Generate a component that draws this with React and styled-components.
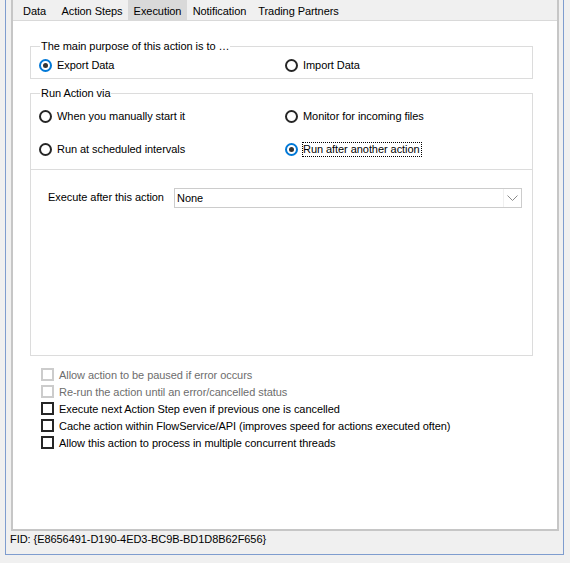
import React from 'react'
import styled, { createGlobalStyle } from 'styled-components'

const tabs = [
  { label: 'Data', width: 43 },
  { label: 'Action Steps', width: 72 },
  { label: 'Execution', width: 59, active: true },
  { label: 'Notification', width: 65 },
  { label: 'Trading Partners', width: 93 },
]

const checks = [
  { label: 'Allow action to be paused if error occurs', disabled: true },
  { label: 'Re-run the action until an error/cancelled status', disabled: true },
  { label: 'Execute next Action Step even if previous one is cancelled' },
  { label: 'Cache action within FlowService/API (improves speed for actions executed often)' },
  { label: 'Allow this action to process in multiple concurrent threads' },
]

function Radio({ checked, focused, children }) {
  return (
    <RadioLabel>
      <RadioCircle $checked={checked} />
      <RadioText $focused={focused}>{children}</RadioText>
    </RadioLabel>
  )
}

function App() {
  return (
    <>
      <GlobalStyle />
      <Frame>
        <TabControl>
          <TabStrip>
            {tabs.map((t) => (
              <Tab key={t.label} $width={t.width} $active={t.active}>
                {t.label}
              </Tab>
            ))}
          </TabStrip>

          <Panel>
            <Group>
              <Legend>The main purpose of this action is to …</Legend>
              <Options $top={6} $bottom={6}>
                <Radio checked>Export Data</Radio>
                <Radio>Import Data</Radio>
              </Options>
            </Group>

            <Group $gap={8}>
              <Legend>Run Action via</Legend>
              <Options $top={10} $bottom={13}>
                <Radio>When you manually start it</Radio>
                <Radio>Monitor for incoming files</Radio>
                <Radio>Run at scheduled intervals</Radio>
                <Radio checked focused>Run after another action</Radio>
              </Options>
              <ExecuteSection>
                <FieldRow>
                  <FieldLabel>Execute after this action</FieldLabel>
                  <Select>
                    <SelectValue>None</SelectValue>
                    <SelectArrow>
                      <svg width="11" height="6" viewBox="0 0 11 6">
                        <polyline points="0.5,0.5 5.5,5.5 10.5,0.5" fill="none" stroke="#8a8a8a" strokeWidth="1" />
                      </svg>
                    </SelectArrow>
                  </Select>
                </FieldRow>
              </ExecuteSection>
            </Group>

            <CheckList>
              {checks.map((c) => (
                <CheckRow key={c.label} $disabled={c.disabled}>
                  <CheckBox $disabled={c.disabled} />
                  <span>{c.label}</span>
                </CheckRow>
              ))}
            </CheckList>
          </Panel>
        </TabControl>
        <Fid>FID: {'{E8656491-D190-4ED3-BC9B-BD1D8B62F656}'}</Fid>
      </Frame>
    </>
  )
}

export default App


// Styled Components
const GlobalStyle = createGlobalStyle`
  html, body {
    margin: 0;
    padding: 0;
    background: #f0f0f0;
  }
  body {
    font-family: "Liberation Sans", Arial, sans-serif;
    font-size: 11px;
    letter-spacing: -0.06px;
    color: #000;
  }
`

const Frame = styled.div`
  box-sizing: border-box;
  margin-left: 5px;
  width: 559px;
  height: 555px;
  padding: 0 4px 0 5px;
  border: 1px solid #7f9dcf;
  border-top: none;
  background: #f0f0f0;
`

const TabControl = styled.div`
  box-sizing: border-box;
  height: 531px;
  display: flex;
  flex-direction: column;
  border: 2px solid #c6c6c6;
  border-top: none;
`

const TabStrip = styled.div`
  display: flex;
  height: 20px;
  background: #f0f0f0;
  border-bottom: 1px solid #d9d9d9;
`

const Tab = styled.div`
  box-sizing: border-box;
  width: ${(p) => p.$width}px;
  padding-top: 2px;
  line-height: 18px;
  text-align: center;
  white-space: nowrap;
  background: ${(p) => (p.$active ? '#d9d9d9' : 'transparent')};
`

const Panel = styled.div`
  flex: 1;
  background: #fff;
  padding-top: 19px;
`

const Group = styled.fieldset`
  box-sizing: border-box;
  width: 503px;
  margin: ${(p) => p.$gap || 0}px 0 0 17px;
  padding: 0;
  border: 1px solid #dcdcdc;
  min-width: 0;
`

const Legend = styled.legend`
  margin-left: 9px;
  padding: 0 1px;
  line-height: 13px;
`

const Options = styled.div`
  display: grid;
  grid-template-columns: 246px 1fr;
  row-gap: 20px;
  padding: ${(p) => p.$top}px 0 ${(p) => p.$bottom}px 8px;
`

const RadioLabel = styled.label`
  display: flex;
  align-items: center;
  height: 13px;
  white-space: nowrap;
`

const RadioCircle = styled.span`
  position: relative;
  box-sizing: border-box;
  flex: none;
  width: 13px;
  height: 13px;
  border-radius: 50%;
  background: #fff;
  border: 2px solid ${(p) => (p.$checked ? '#0078d7' : '#262626')};

  &::after {
    content: '';
    display: ${(p) => (p.$checked ? 'block' : 'none')};
    position: absolute;
    left: 2px;
    top: 2px;
    width: 5px;
    height: 5px;
    border-radius: 50%;
    background: #333;
  }
`

const RadioText = styled.span`
  line-height: 13px;
  margin-left: ${(p) => (p.$focused ? 4 : 5)}px;
  border: ${(p) => (p.$focused ? '1px dotted #000' : 'none')};
  padding: ${(p) => (p.$focused ? '0 1px 0 0' : '0')};
`

const ExecuteSection = styled.div`
  box-sizing: border-box;
  height: 186px;
  padding: 18px 0 0 17px;
  border-top: 1px solid #dcdcdc;
`

const FieldRow = styled.div`
  display: flex;
  align-items: center;
`

const FieldLabel = styled.span`
  width: 126px;
  margin-bottom: 3px;
  white-space: nowrap;
`

const Select = styled.div`
  box-sizing: border-box;
  display: flex;
  align-items: center;
  width: 348px;
  height: 20px;
  border: 1px solid #cccccc;
  background: #fff;
`

const SelectValue = styled.span`
  flex: 1;
  padding-left: 2px;
`

const SelectArrow = styled.span`
  display: flex;
  align-items: center;
  justify-content: center;
  width: 17px;
  height: 100%;
  border-left: 1px solid #f0f0f0;
`

const CheckList = styled.div`
  margin: 10px 0 0 28px;
`

const CheckRow = styled.label`
  display: flex;
  align-items: center;
  height: 17px;
  white-space: nowrap;
  color: ${(p) => (p.$disabled ? '#6d6d6d' : '#000')};
`

const CheckBox = styled.span`
  box-sizing: border-box;
  flex: none;
  width: 13px;
  height: 13px;
  margin-right: 5px;
  background: #fff;
  border: 2px solid ${(p) => (p.$disabled ? '#cccccc' : '#262626')};
`

const Fid = styled.div`
  margin: 2px 0 0 -1px;
  line-height: 13px;
`
